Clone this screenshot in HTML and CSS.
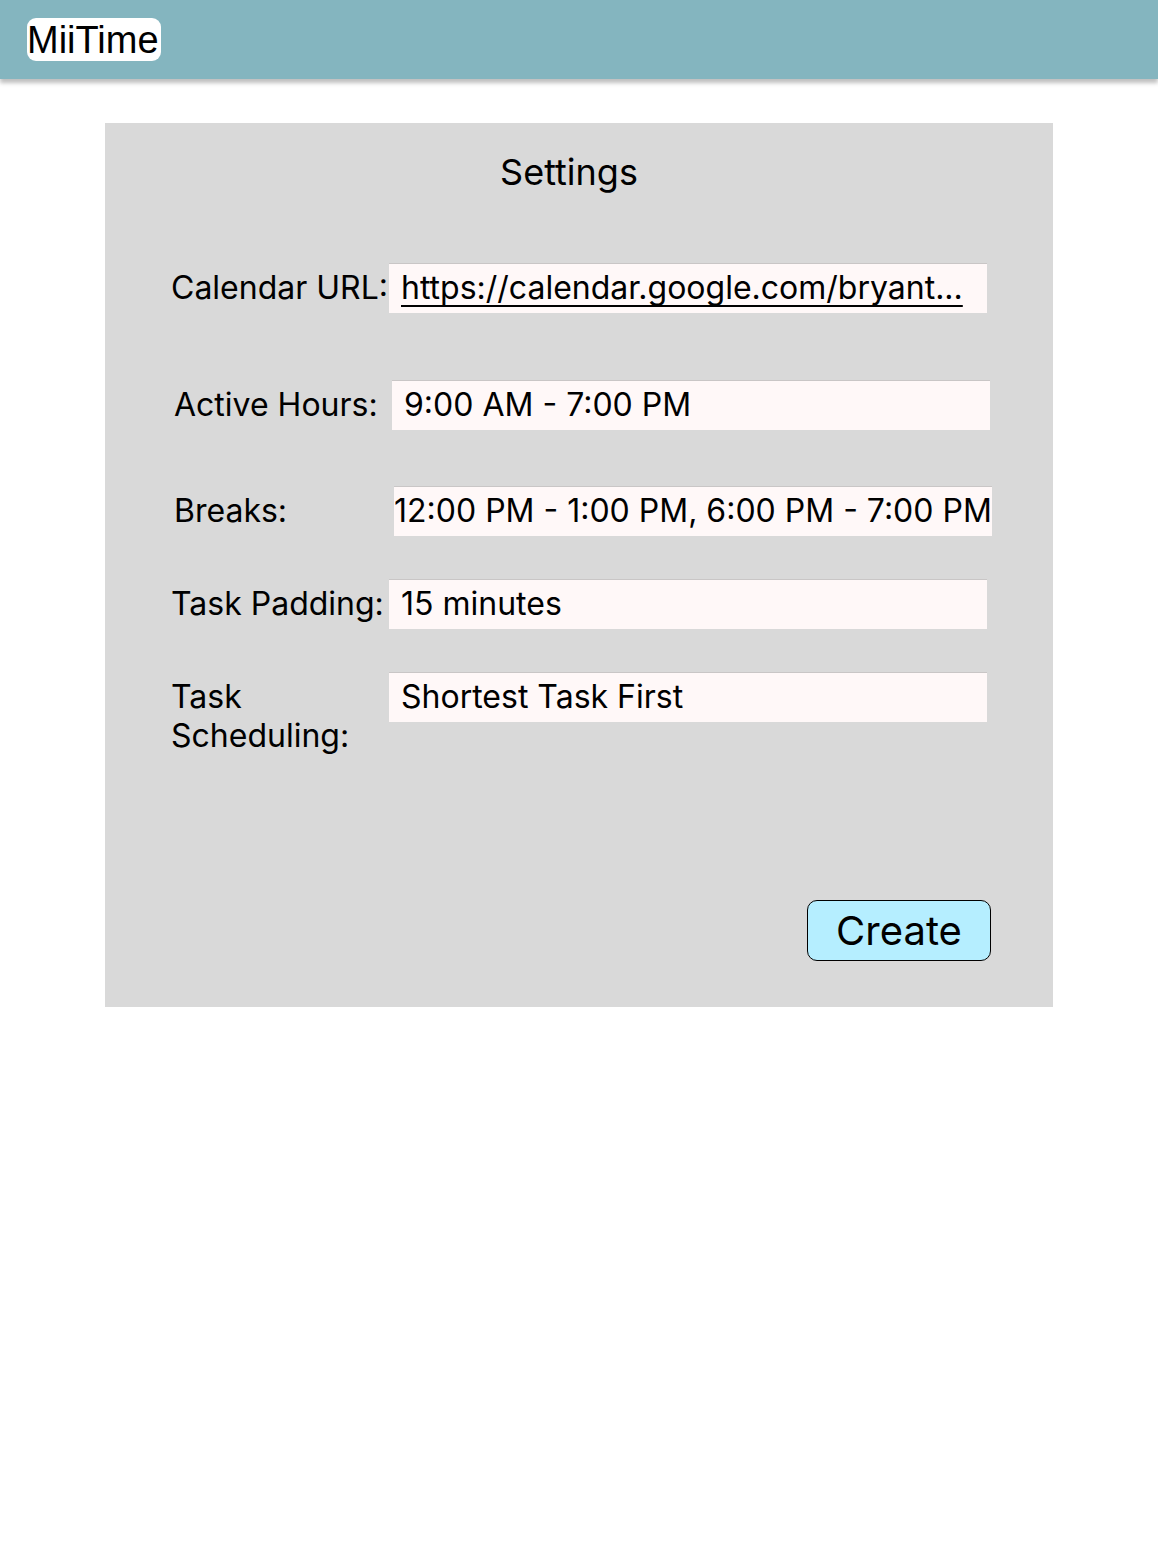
FILE: index.html
```html
<!DOCTYPE html>
<html lang="en">
<head>
<meta charset="utf-8">
<title>MiiTime - Settings</title>
<link rel="stylesheet" href="styles.css">
</head>
<body>
<header class="topbar">
  <div class="logo">MiiTime</div>
</header>
<main class="panel">
  <h1 class="title">Settings</h1>
  <div class="row row-cal">
    <div class="label">Calendar URL:</div>
    <div class="field"><span class="link">https://calendar.google.com/bryant...</span></div>
  </div>
  <div class="row row-active">
    <div class="label">Active Hours:</div>
    <div class="field">9:00 AM - 7:00 PM</div>
  </div>
  <div class="row row-breaks">
    <div class="label label-wide">Breaks:</div>
    <div class="field field-flush">12:00 PM - 1:00 PM, 6:00 PM - 7:00 PM</div>
  </div>
  <div class="row row-padding">
    <div class="label">Task Padding:</div>
    <div class="field">15 minutes</div>
  </div>
  <div class="row row-sched">
    <div class="label label-narrow">Task Scheduling:</div>
    <div class="field">Shortest Task First</div>
  </div>
  <div class="actions">
    <button class="create">Create</button>
  </div>
</main>
</body>
</html>
```

FILE: styles.css
```css
* { box-sizing: border-box; }
html, body { margin: 0; padding: 0; }
body {
  background: #ffffff;
  font-family: Inter, "Noto Sans", sans-serif;
  color: #000;
  width: 1158px;
  min-height: 1557px;
}
.topbar {
  height: 79px;
  background: #84b5bf;
  box-shadow: 0 4px 4px rgba(0,0,0,0.25);
  padding: 18px 0 0 27px;
}
.logo {
  display: inline-block;
  width: 134px;
  height: 43px;
  background: #fff;
  border-radius: 9px;
  font-family: "Liberation Sans", Arial, sans-serif;
  font-size: 38px;
  line-height: 44px;
  padding-left: 0;
  white-space: nowrap;
}
.panel {
  margin: 44px 0 0 105px;
  width: 948px;
  height: 884px;
  background: #d9d9d9;
  padding: 28px 62px 0 66px;
}
.title {
  margin: 0 0 0 -24px;
  font-size: 36px;
  font-weight: 400;
  line-height: 43px;
  text-align: center;
}
.row {
  display: flex;
  align-items: flex-start;
}
.row-cal { margin-top: 69px; }
.row-active { margin-top: 67px; padding-left: 3px; }
.row-breaks { margin-top: 56px; padding-left: 3px; }
.row-padding { margin-top: 43px; }
.row-sched { margin-top: 43px; }
.label {
  width: 218px;
  flex: none;
  font-size: 32px;
  line-height: 39px;
  padding-top: 5px;
}
.label-wide { width: 220px; }
.label-narrow { padding-right: 40px; }
.field {
  width: 598px;
  height: 50px;
  flex: none;
  background: #fff8f8;
  border-top: 1px solid #c9c6c6;
  font-size: 32px;
  line-height: 48px;
  padding-left: 12px;
  white-space: nowrap;
  overflow: visible;
}
.field-flush { padding-left: 0; }
.link {
  text-decoration: underline;
  text-decoration-thickness: 2px;
  text-underline-offset: 6px;
  text-decoration-skip-ink: none;
}
.actions {
  display: flex;
  justify-content: flex-end;
  margin-top: 145px;
}
.create {
  width: 184px;
  height: 61px;
  background: #b5eeff;
  border: 1px solid #000;
  border-radius: 10px;
  font-family: Inter, "Noto Sans", sans-serif;
  font-size: 40px;
  line-height: 1;
  color: #000;
  padding: 0;
}
```
